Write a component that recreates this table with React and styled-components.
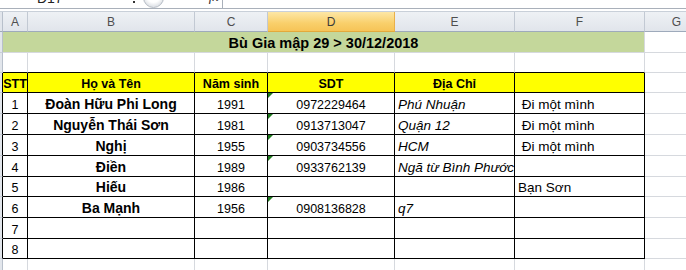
import React from 'react';
import styled, { createGlobalStyle } from 'styled-components';

const GRID = '#d6d9de';
const INK = '#000';

const Global = createGlobalStyle`
  html, body { margin: 0; padding: 0; background: #fff; overflow: hidden; }
  body { font-family: "Liberation Sans", Arial, sans-serif; }
`;

const Screen = styled.div`
  width: 686px;
  height: 270px;
  overflow: hidden;
  background: #fff;
  display: flex;
  flex-direction: column;
`;

const FormulaBar = styled.div`
  flex: none;
  height: 8px;
  display: flex;
  align-items: flex-start;
  border-bottom: 1px solid #a9b0ba;
  overflow: hidden;
`;

const NameBox = styled.div`
  width: 222px;
  flex: none;
  display: flex;
  align-items: flex-start;
  color: #222;
`;

const NameText = styled.span`
  margin: -9px 0 0 37px;
  font-size: 14px;
  line-height: 14px;
`;

const Dot = styled.span`
  width: 2px;
  height: 2px;
  margin: 1px 0 0 70px;
  background: #333;
`;

const Knob = styled.span`
  width: 19px;
  height: 19px;
  border-radius: 50%;
  margin: -13px 0 0 8px;
  border: 1px solid #b4bac3;
  background: radial-gradient(circle at 50% 40%, #fff 0 45%, #e3e6ea 70%);
`;

const Fx = styled.span`
  margin: -10px 0 0 45px;
  font-size: 14px;
  line-height: 14px;
  font-style: italic;
  font-family: "Liberation Serif", serif;
  color: #333;
`;

const FormulaInput = styled.div`
  flex: 1;
  height: 8px;
  border-left: 1px solid #a9b0ba;
  background: #fff;
`;

const Sheet = styled.div`
  margin-top: 2px;
  border-top: 1px solid #c9d0d9;
  display: grid;
  grid-template-columns: 3px 25px 167px 73px 127px 120px 130px 64px;
  grid-template-rows: 20px 21px 20px 20px 21px 21px 21px 21px 20px 21px 21px 20px 21px;
`;

const Stub = styled.div`
  background: #e2e6ec;
  border-right: 1px solid ${p => p.$edge || '#b8c0cb'};
  border-bottom: 1px solid ${p => (p.$head ? '#9eaabb' : '#c9cfd8')};
`;

const ColHead = styled.div`
  display: flex;
  align-items: center;
  justify-content: center;
  font-size: 12px;
  color: ${p => (p.$active ? '#3a3a3a' : '#4e4e4e')};
  background: ${p =>
    p.$active
      ? 'linear-gradient(#fde7a6, #f9cf6a 60%, #f6c457)'
      : 'linear-gradient(#eef1f5, #e1e5eb)'};
  border-right: 1px solid ${p => (p.$active ? '#e9b04a' : '#c2c9d3')};
  border-bottom: 1px solid ${p => (p.$active ? '#e3a93c' : '#9eaabb')};
`;

const Cell = styled.div`
  position: relative;
  display: flex;
  align-items: flex-end;
  justify-content: ${p => (p.$left ? 'flex-start' : 'center')};
  padding: 0 ${p => (p.$left ? '0 1px 3px' : '0 1px 0')};
  padding-left: ${p => (p.$left ? '3px' : '0')};
  background: ${p => p.$bg || '#fff'};
  border-right: 1px solid ${p => p.$r || GRID};
  border-bottom: 1px solid ${p => p.$b || GRID};
  font-size: ${p => p.$size || 13.5}px;
  font-weight: ${p => (p.$bold ? 700 : 400)};
  font-style: ${p => (p.$italic ? 'italic' : 'normal')};
  color: #000;
  white-space: pre;
  line-height: normal;
  grid-column: ${p => (p.$span ? `span ${p.$span}` : 'auto')};

  &::before {
    content: '';
    display: ${p => (p.$flag ? 'block' : 'none')};
    position: absolute;
    top: 0;
    left: 0;
    border-top: 5px solid #1e7b1e;
    border-right: 5px solid transparent;
  }
`;

const letters = ['A', 'B', 'C', 'D', 'E', 'F', 'G'];

const rows = [
  ['1', 'Đoàn Hữu Phi Long', '1991', '0972229464', 'Phú Nhuận', ' Đi một mình'],
  ['2', 'Nguyễn Thái Sơn', '1981', '0913713047', 'Quận 12', ' Đi một mình'],
  ['3', 'Nghị', '1955', '0903734556', 'HCM', ' Đi một mình'],
  ['4', 'Điền', '1989', '0933762139', 'Ngã từ Bình Phước', ''],
  ['5', 'Hiếu', '1986', '', '', 'Bạn Sơn'],
  ['6', 'Ba Mạnh', '1956', '0908136828', 'q7', ''],
  ['7', '', '', '', '', ''],
  ['8', '', '', '', '', ''],
];

function DataRow({ r }) {
  const [stt, name, year, phone, addr, note] = r;
  return (
    <>
      <Stub $edge={INK} />
      <Cell $r={INK} $b={INK} $size={12.5}>{stt}</Cell>
      <Cell $r={INK} $b={INK} $bold $size={14}>{name}</Cell>
      <Cell $r={INK} $b={INK} $size={12.5}>{year}</Cell>
      <Cell $r={INK} $b={INK} $size={12.5} $flag={phone !== ''}>{phone}</Cell>
      <Cell $r={INK} $b={INK} $left $italic>{addr}</Cell>
      <Cell $r={INK} $b={INK} $left>{note}</Cell>
      <Cell />
    </>
  );
}

export default function App() {
  return (
    <Screen>
      <Global />
      <FormulaBar>
        <NameBox>
          <NameText>D17</NameText>
          <Dot />
          <Knob />
          <Fx>fx</Fx>
        </NameBox>
        <FormulaInput />
      </FormulaBar>
      <Sheet>
        <Stub $head />
        {letters.map(l => (
          <ColHead key={l} $active={l === 'D'}>{l}</ColHead>
        ))}

        <Stub />
        <Cell $span={6} $bg="#c4d79b" $bold $size={14.5}>Bù Gia mập 29 &gt; 30/12/2018</Cell>
        <Cell />

        <Stub />
        {[0, 1, 2, 3, 4, 5].map(i => (
          <Cell key={i} $b={INK} />
        ))}
        <Cell />

        <Stub $edge={INK} />
        <Cell $bg="#ffff00" $r={INK} $b={INK} $bold $size={12.5}>STT</Cell>
        <Cell $bg="#ffff00" $r={INK} $b={INK} $bold $size={12.5}>Họ và Tên</Cell>
        <Cell $bg="#ffff00" $r={INK} $b={INK} $bold $size={12.5}>Năm sinh</Cell>
        <Cell $bg="#ffff00" $r={INK} $b={INK} $bold $size={12.5}>SDT</Cell>
        <Cell $bg="#ffff00" $r={INK} $b={INK} $bold $size={12.5}>Địa Chỉ</Cell>
        <Cell $bg="#ffff00" $r={INK} $b={INK} />
        <Cell />

        {rows.map(r => (
          <DataRow key={r[0]} r={r} />
        ))}

        <Stub />
        {[0, 1, 2, 3, 4, 5, 6].map(i => (
          <Cell key={i} />
        ))}
      </Sheet>
    </Screen>
  );
}
